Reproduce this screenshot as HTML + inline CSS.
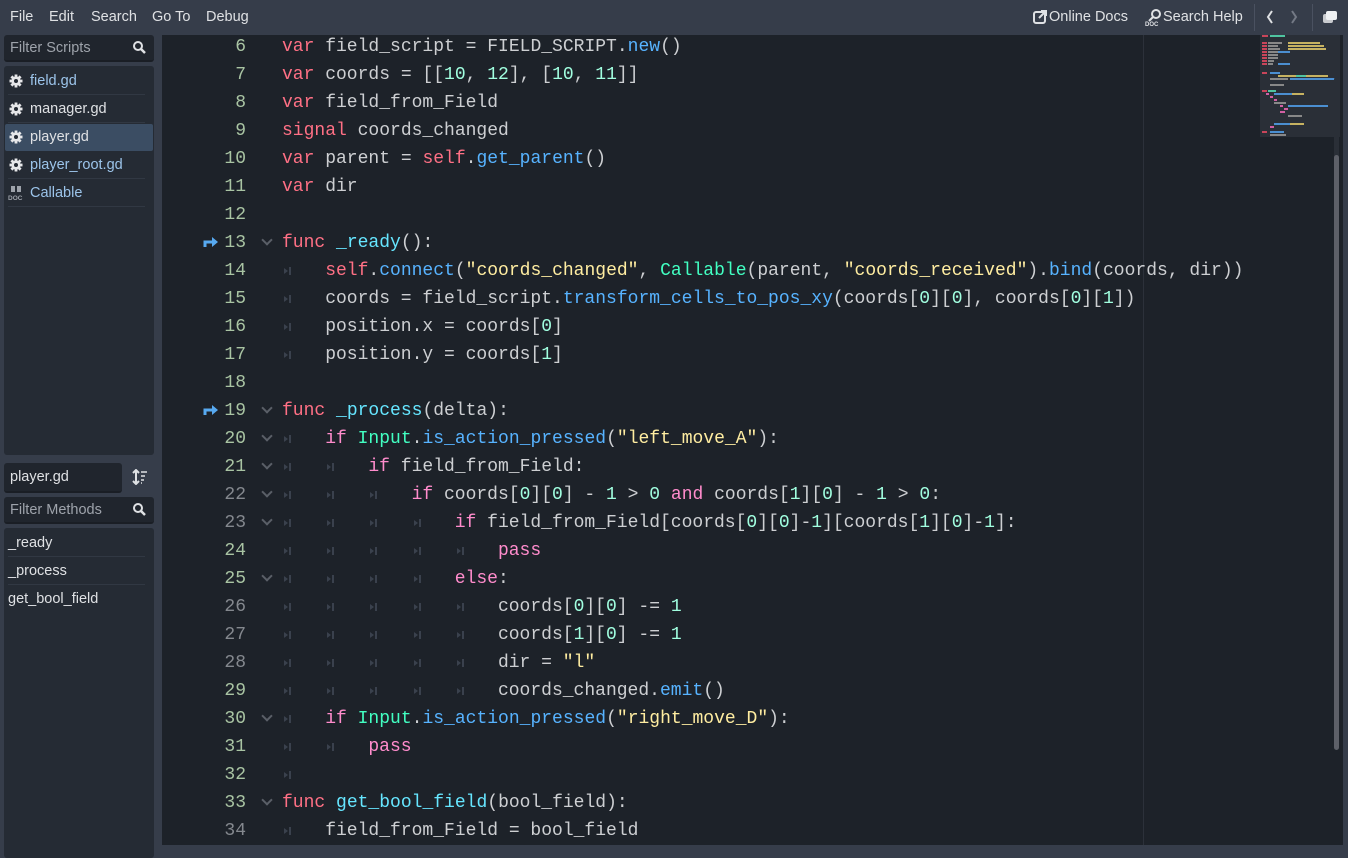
<!DOCTYPE html>
<html><head><meta charset="utf-8"><style>
*{margin:0;padding:0;box-sizing:border-box}
body{width:1348px;height:855px;background:#363d4a;font-family:"Liberation Sans","DejaVu Sans",sans-serif;font-size:14.5px;color:#dfe1e4;position:relative;overflow:hidden}
.a{position:absolute}
.menu span{position:absolute;top:9px;color:#dfe1e4}
.panel{position:absolute;background:#252b34;border-radius:3px}
.inp{position:absolute;background:#20252d;border-radius:3px;border-bottom:2px solid #1a1e25}
.row{position:absolute;left:8px;height:28px;line-height:28px}
.sep{position:absolute;height:1px;background:#313843}
#ed{position:absolute;left:162px;top:35px;width:1181px;height:810px;background:#1d2229;overflow:hidden}
.ln{position:absolute;height:28px;line-height:28px;font-family:"Liberation Mono","DejaVu Sans Mono",monospace;font-size:18px;white-space:pre}
.num{width:84px;text-align:right;left:0}
.s{color:#a9c4a3}.g{color:#84888e !important}
.code{left:120px;color:#cdcfd2}
.t{display:inline-block;width:43.2px;height:28px;position:relative;vertical-align:top}
.t::before{content:"";position:absolute;left:2px;top:11px;border-left:4px solid #3a414d;border-top:3px solid transparent;border-bottom:3px solid transparent}
.t::after{content:"";position:absolute;left:7px;top:10px;width:2px;height:8px;background:#3a414d}
.k{color:#ff7085}.c{color:#ff8ccc}.f{color:#57b3ff}.fd{color:#66e6ff}.st{color:#ffeda1}.n{color:#a1ffe0}.cl{color:#42ffc2}
.fold{position:absolute;left:101px;width:8px;height:8px;border-right:2px solid #5a5f67;border-bottom:2px solid #5a5f67;transform:rotate(45deg)}
.gear{position:absolute;left:5px}
</style></head><body>
<svg width="0" height="0" style="position:absolute"><defs><g id="gr"><g fill="#e6e7e9"><circle cx="7" cy="7" r="4.6"/><rect x="5.6" y="0.5" width="2.8" height="13"/><rect x="0.5" y="5.6" width="13" height="2.8"/><rect x="5.6" y="0.5" width="2.8" height="13" transform="rotate(45 7 7)"/><rect x="5.6" y="0.5" width="2.8" height="13" transform="rotate(-45 7 7)"/></g><circle cx="7" cy="7" r="2" fill="#252b34"/></g></defs></svg>
<div class="menu"><span style="left:10px">File</span><span style="left:49px">Edit</span><span style="left:91px">Search</span><span style="left:152px">Go To</span><span style="left:206px">Debug</span>
<span style="left:1049px">Online Docs</span><span style="left:1163px">Search Help</span></div>
<svg class="a" style="left:1032px;top:9px" width="16" height="16" viewBox="0 0 16 16"><rect x="2" y="3" width="11" height="11" rx="2" fill="none" stroke="#dfe1e4" stroke-width="2"/><path d="M7 9l7-7M9 2h5v5" stroke="#dfe1e4" stroke-width="2" fill="none"/></svg>
<svg class="a" style="left:1145px;top:8px" width="18" height="18" viewBox="0 0 18 18"><circle cx="11" cy="6" r="4" fill="none" stroke="#dfe1e4" stroke-width="2"/><path d="M8 9l-4 4" stroke="#dfe1e4" stroke-width="2"/><text x="0" y="18" font-size="6" font-weight="bold" fill="#dfe1e4" font-family="Liberation Sans">DOC</text></svg>
<div class="a" style="left:1254px;top:4px;width:1px;height:27px;background:#4a5160"></div>
<div class="a" style="left:1312px;top:4px;width:1px;height:27px;background:#4a5160"></div>
<svg class="a" style="left:1264px;top:9px" width="40" height="16"><path d="M8 2L4 8l4 6" stroke="#dfe1e4" stroke-width="2" fill="none"/><path d="M28 2l4 6-4 6" stroke="#737985" stroke-width="2" fill="none"/></svg>
<svg class="a" style="left:1322px;top:9px" width="16" height="16"><rect x="1" y="5" width="10" height="9" rx="2" fill="#c9cbcf"/><rect x="4" y="2" width="11" height="9" rx="2" fill="#eef0f2"/></svg>

<div class="inp" style="left:4px;top:35px;width:150px;height:27px"><span class="a" style="left:6px;top:5px;color:#9ea3ab">Filter Scripts</span>
<svg class="a" style="left:128px;top:5px" width="16" height="16"><circle cx="6" cy="6" r="4" fill="none" stroke="#dfe1e4" stroke-width="2"/><path d="M9 9l4 4" stroke="#dfe1e4" stroke-width="2.5"/></svg></div>
<div class="panel" style="left:4px;top:66px;width:150px;height:389px">
<div class="a" style="left:1px;top:58px;width:148px;height:27px;background:#3b4d63;border-radius:2px"></div>
<div class="sep" style="left:4px;top:28px;width:137px"></div><div class="sep" style="left:4px;top:56px;width:137px"></div><div class="sep" style="left:4px;top:112px;width:137px"></div><div class="sep" style="left:4px;top:140px;width:137px"></div>
<div class="row" style="top:1px;left:26px;color:#9cc4ea">field.gd</div>
<div class="row" style="top:29px;left:26px">manager.gd</div>
<div class="row" style="top:57px;left:26px">player.gd</div>
<div class="row" style="top:85px;left:26px;color:#9cc4ea">player_root.gd</div>
<div class="row" style="top:113px;left:26px;color:#9cc4ea">Callable</div>
<svg class="gear" style="top:8px" width="14" height="14"><use href="#gr"/></svg>
<svg class="gear" style="top:36px" width="14" height="14"><use href="#gr"/></svg>
<svg class="gear" style="top:64px" width="14" height="14"><use href="#gr"/></svg>
<svg class="gear" style="top:92px" width="14" height="14"><use href="#gr"/></svg>
<svg class="a" style="left:4px;top:119px" width="16" height="16"><rect x="3" y="1" width="4" height="6" fill="#9ea3ab"/><rect x="9" y="1" width="4" height="6" fill="#9ea3ab"/><text x="0" y="15" font-size="6.5" font-weight="bold" fill="#9ea3ab" font-family="Liberation Sans">DOC</text></svg>
</div>
<div class="inp" style="left:4px;top:463px;width:118px;height:30px"><span class="a" style="left:6px;top:6px">player.gd</span></div>
<svg class="a" style="left:132px;top:469px" width="16" height="16"><path d="M4 1v14M1 4l3-3 3 3M1 12l3 3 3-3" stroke="#dfe1e4" stroke-width="2" fill="none"/><path d="M9 3h6M9 7h4M9 11h3M9 14h1" stroke="#dfe1e4" stroke-width="1.5"/></svg>
<div class="inp" style="left:4px;top:497px;width:150px;height:27px"><span class="a" style="left:6px;top:5px;color:#9ea3ab">Filter Methods</span>
<svg class="a" style="left:128px;top:5px" width="16" height="16"><circle cx="6" cy="6" r="4" fill="none" stroke="#dfe1e4" stroke-width="2"/><path d="M9 9l4 4" stroke="#dfe1e4" stroke-width="2.5"/></svg></div>
<div class="panel" style="left:4px;top:528px;width:150px;height:330px">
<div class="sep" style="left:4px;top:28px;width:137px"></div><div class="sep" style="left:4px;top:56px;width:137px"></div>
<div class="row" style="top:1px;left:4px">_ready</div>
<div class="row" style="top:29px;left:4px">_process</div>
<div class="row" style="top:57px;left:4px">get_bool_field</div>
</div>

<div id="ed">
<div class="a" style="left:981px;top:0;width:1px;height:810px;background:#2c313a"></div>
<div class="a" style="left:1098px;top:0;width:80px;height:102px;background:#2a2f37"></div>
<svg class="a" style="left:1098px;top:0" width="80" height="102">
<g fill="#c9455a"><rect x="2" y="0" width="6" height="2"/><rect x="2" y="7" width="5" height="2"/><rect x="2" y="10" width="5" height="2"/><rect x="2" y="13" width="5" height="2"/><rect x="2" y="16" width="5" height="2"/><rect x="2" y="19" width="5" height="2"/><rect x="2" y="22" width="5" height="2"/><rect x="2" y="25" width="5" height="2"/><rect x="2" y="28" width="5" height="2"/><rect x="2" y="37" width="5" height="2"/><rect x="2" y="55" width="5" height="2"/><rect x="2" y="96" width="5" height="2"/></g>
<g fill="#888"><rect x="8" y="7" width="14" height="2"/><rect x="8" y="10" width="10" height="2"/><rect x="8" y="13" width="12" height="2"/><rect x="8" y="16" width="20" height="2"/><rect x="8" y="19" width="10" height="2"/><rect x="8" y="22" width="10" height="2"/><rect x="8" y="25" width="6" height="2"/><rect x="8" y="28" width="5" height="2"/><rect x="10" y="43" width="18" height="2"/><rect x="10" y="49" width="14" height="2"/><rect x="14" y="67" width="12" height="2"/><rect x="28" y="80" width="14" height="2"/><rect x="10" y="99" width="16" height="2"/></g>
<g fill="#c6b261"><rect x="28" y="7" width="32" height="2"/><rect x="28" y="10" width="36" height="2"/><rect x="28" y="13" width="38" height="2"/><rect x="18" y="40" width="18" height="2"/><rect x="46" y="40" width="22" height="2"/><rect x="30" y="58" width="14" height="2"/><rect x="30" y="88" width="14" height="2"/></g>
<g fill="#4b8fd1"><rect x="18" y="16" width="12" height="2"/><rect x="18" y="28" width="12" height="2"/><rect x="30" y="43" width="48" height="2"/><rect x="10" y="37" width="10" height="2"/><rect x="14" y="58" width="18" height="2"/><rect x="10" y="96" width="14" height="2"/><rect x="14" y="88" width="16" height="2"/><rect x="28" y="70" width="40" height="2"/></g>
<g fill="#d25fa3"><rect x="6" y="58" width="3" height="2"/><rect x="10" y="61" width="3" height="2"/><rect x="14" y="64" width="3" height="2"/><rect x="20" y="70" width="3" height="2"/><rect x="24" y="73" width="4" height="2"/><rect x="20" y="76" width="5" height="2"/><rect x="10" y="91" width="4" height="2"/></g>
<g fill="#4fc4a0"><rect x="10" y="0" width="15" height="2"/><rect x="36" y="40" width="10" height="2"/><rect x="8" y="55" width="8" height="2"/></g>
</svg>
<div class="a" style="left:1172px;top:42px;width:5px;height:672px;background:#2a2f37;border-radius:3px"></div>
<div class="a" style="left:1172px;top:120px;width:5px;height:595px;background:#5d6068;border-radius:3px"></div>

<svg class="a" style="left:40px;top:199px" width="18" height="14"><path d="M3 13V8h8" stroke="#57a9f0" stroke-width="3" fill="none"/><path d="M10 3l6 5-6 5z" fill="#57a9f0"/></svg>
<svg class="a" style="left:40px;top:367px" width="18" height="14"><path d="M3 13V8h8" stroke="#57a9f0" stroke-width="3" fill="none"/><path d="M10 3l6 5-6 5z" fill="#57a9f0"/></svg>

<div class="ln num s" style="top:-2px">6</div><div class="ln code" style="top:-2px"><span class="k">var</span> field_script = FIELD_SCRIPT.<span class="f">new</span>()</div>
<div class="ln num s" style="top:26px">7</div><div class="ln code" style="top:26px"><span class="k">var</span> coords = [[<span class="n">10</span>, <span class="n">12</span>], [<span class="n">10</span>, <span class="n">11</span>]]</div>
<div class="ln num s" style="top:54px">8</div><div class="ln code" style="top:54px"><span class="k">var</span> field_from_Field</div>
<div class="ln num s" style="top:82px">9</div><div class="ln code" style="top:82px"><span class="k">signal</span> coords_changed</div>
<div class="ln num s" style="top:110px">10</div><div class="ln code" style="top:110px"><span class="k">var</span> parent = <span class="k">self</span>.<span class="f">get_parent</span>()</div>
<div class="ln num s" style="top:138px">11</div><div class="ln code" style="top:138px"><span class="k">var</span> dir</div>
<div class="ln num s" style="top:166px">12</div>
<div class="ln num s" style="top:194px">13</div><div class="fold" style="top:201px"></div><div class="ln code" style="top:194px"><span class="k">func</span> <span class="fd">_ready</span>():</div>
<div class="ln num s" style="top:222px">14</div><div class="ln code" style="top:222px"><span class="t"></span><span class="k">self</span>.<span class="f">connect</span>(<span class="st">"coords_changed"</span>, <span class="cl">Callable</span>(parent, <span class="st">"coords_received"</span>).<span class="f">bind</span>(coords, dir))</div>
<div class="ln num s" style="top:250px">15</div><div class="ln code" style="top:250px"><span class="t"></span>coords = field_script.<span class="f">transform_cells_to_pos_xy</span>(coords[<span class="n">0</span>][<span class="n">0</span>], coords[<span class="n">0</span>][<span class="n">1</span>])</div>
<div class="ln num s" style="top:278px">16</div><div class="ln code" style="top:278px"><span class="t"></span>position.x = coords[<span class="n">0</span>]</div>
<div class="ln num s" style="top:306px">17</div><div class="ln code" style="top:306px"><span class="t"></span>position.y = coords[<span class="n">1</span>]</div>
<div class="ln num s" style="top:334px">18</div>
<div class="ln num s" style="top:362px">19</div><div class="fold" style="top:369px"></div><div class="ln code" style="top:362px"><span class="k">func</span> <span class="fd">_process</span>(delta):</div>
<div class="ln num s" style="top:390px">20</div><div class="fold" style="top:397px"></div><div class="ln code" style="top:390px"><span class="t"></span><span class="c">if</span> <span class="cl">Input</span>.<span class="f">is_action_pressed</span>(<span class="st">"left_move_A"</span>):</div>
<div class="ln num s" style="top:418px">21</div><div class="fold" style="top:425px"></div><div class="ln code" style="top:418px"><span class="t"></span><span class="t"></span><span class="c">if</span> field_from_Field:</div>
<div class="ln num g" style="top:446px">22</div><div class="fold" style="top:453px"></div><div class="ln code" style="top:446px"><span class="t"></span><span class="t"></span><span class="t"></span><span class="c">if</span> coords[<span class="n">0</span>][<span class="n">0</span>] - <span class="n">1</span> &gt; <span class="n">0</span> <span class="c">and</span> coords[<span class="n">1</span>][<span class="n">0</span>] - <span class="n">1</span> &gt; <span class="n">0</span>:</div>
<div class="ln num g" style="top:474px">23</div><div class="fold" style="top:481px"></div><div class="ln code" style="top:474px"><span class="t"></span><span class="t"></span><span class="t"></span><span class="t"></span><span class="c">if</span> field_from_Field[coords[<span class="n">0</span>][<span class="n">0</span>]-<span class="n">1</span>][coords[<span class="n">1</span>][<span class="n">0</span>]-<span class="n">1</span>]:</div>
<div class="ln num s" style="top:502px">24</div><div class="ln code" style="top:502px"><span class="t"></span><span class="t"></span><span class="t"></span><span class="t"></span><span class="t"></span><span class="c">pass</span></div>
<div class="ln num s" style="top:530px">25</div><div class="fold" style="top:537px"></div><div class="ln code" style="top:530px"><span class="t"></span><span class="t"></span><span class="t"></span><span class="t"></span><span class="c">else</span>:</div>
<div class="ln num g" style="top:558px">26</div><div class="ln code" style="top:558px"><span class="t"></span><span class="t"></span><span class="t"></span><span class="t"></span><span class="t"></span>coords[<span class="n">0</span>][<span class="n">0</span>] -= <span class="n">1</span></div>
<div class="ln num g" style="top:586px">27</div><div class="ln code" style="top:586px"><span class="t"></span><span class="t"></span><span class="t"></span><span class="t"></span><span class="t"></span>coords[<span class="n">1</span>][<span class="n">0</span>] -= <span class="n">1</span></div>
<div class="ln num g" style="top:614px">28</div><div class="ln code" style="top:614px"><span class="t"></span><span class="t"></span><span class="t"></span><span class="t"></span><span class="t"></span>dir = <span class="st">"l"</span></div>
<div class="ln num s" style="top:642px">29</div><div class="ln code" style="top:642px"><span class="t"></span><span class="t"></span><span class="t"></span><span class="t"></span><span class="t"></span>coords_changed.<span class="f">emit</span>()</div>
<div class="ln num s" style="top:670px">30</div><div class="fold" style="top:677px"></div><div class="ln code" style="top:670px"><span class="t"></span><span class="c">if</span> <span class="cl">Input</span>.<span class="f">is_action_pressed</span>(<span class="st">"right_move_D"</span>):</div>
<div class="ln num s" style="top:698px">31</div><div class="ln code" style="top:698px"><span class="t"></span><span class="t"></span><span class="c">pass</span></div>
<div class="ln num s" style="top:726px">32</div><div class="ln code" style="top:726px"><span class="t"></span></div>
<div class="ln num s" style="top:754px">33</div><div class="fold" style="top:761px"></div><div class="ln code" style="top:754px"><span class="k">func</span> <span class="fd">get_bool_field</span>(bool_field):</div>
<div class="ln num g" style="top:782px">34</div><div class="ln code" style="top:782px"><span class="t"></span>field_from_Field = bool_field</div>
</div>
</body></html>
